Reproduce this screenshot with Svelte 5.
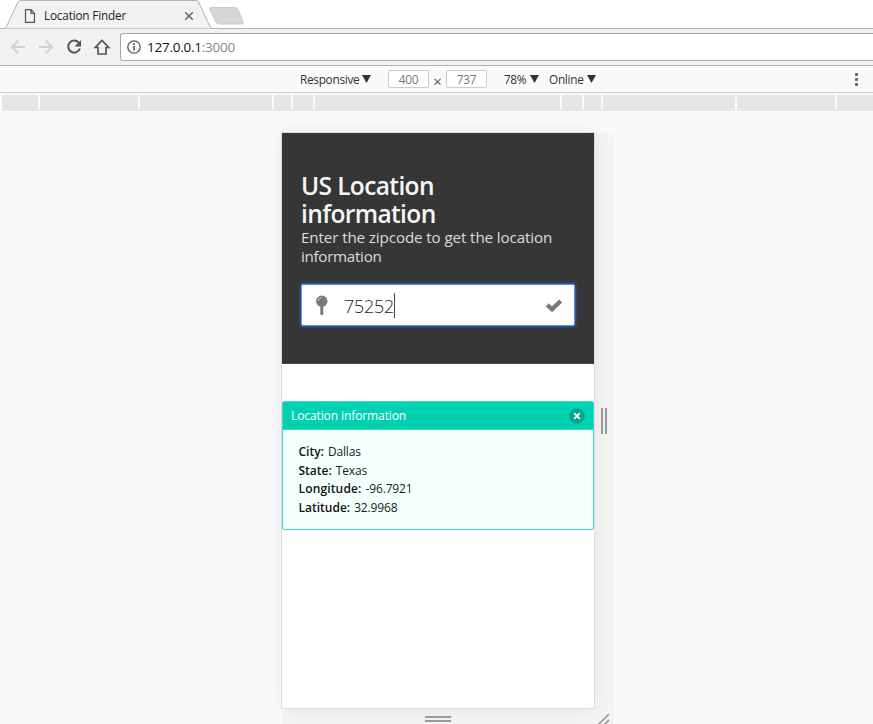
<script>
  let zipcode = $state('75252');
  const segments = [36, 98, 132, 17, 20, 245, 20, 17, 132, 98, 36];
  const facts = [
    ['City', 'Dallas', 'city'],
    ['State', 'Texas', 'state'],
    ['Longitude', '-96.7921', 'longitude'],
    ['Latitude', '32.9968', 'latitude']
  ];
</script>

<div class="browser">
  <header class="tabs">
    <svg class="tab-shape" width="260" height="29" viewBox="0 0 260 29">
      <path d="M0 28.5H4Q5.5 28.500 6.500 26.500L17.500 3Q18.5.5 20.500.5H196Q198 .5 199 3L210 26.500Q211 28.500 213 28.500H260V29H0Z" fill="#f2f2f2" stroke="#b3b1b3" />
      <path d="M211.500 7.500H235.500Q237 7.500 238 9.500L243 21.500Q243.700 24 241.500 24H219Q217 24 216 22L209.500 9Q209 7.500 211.500 7.500Z" fill="#d6d6d6" stroke="#c9c9c9" />
    </svg>
    <svg class="page-icon" width="12" height="14" viewBox="0 0 12 14"><path d="M1.500.600H7L10.500 4.500V13.400H1.500ZM7 .600V4.500H10.500" fill="none" stroke="#555" stroke-width="1.200" /></svg>
    <span class="tab-title">Location Finder</span>
    <svg class="tab-close" width="10" height="10" viewBox="0 0 10 10"><path d="M1.200 1.200L8.800 8.800M8.800 1.200L1.200 8.800" stroke="#666" stroke-width="1.600" /></svg>
  </header>

  <nav class="toolbar">
    <svg width="112" height="22" viewBox="0 0 112 22" fill="none">
      <g stroke="#d2d2d2" stroke-width="1.800"><path d="M25 11H12.500M18.500 4.500L12 11L18.500 17.500" /><path d="M39 11H51.500M45.500 4.500L52 11L45.500 17.500" /></g>
      <path d="M78.700 6.600A6 6 0 1 0 79.900 12.500" stroke="#555" stroke-width="2" />
      <path d="M81 4V10.500H74.500Z" fill="#555" />
      <path d="M102 4.400L95.300 11.500H98V18H106V11.500H108.700Z" stroke="#555" stroke-width="1.700" />
    </svg>
    <div class="address">
      <svg width="14" height="14" viewBox="0 0 14 14"><circle cx="7" cy="7" r="6.200" fill="none" stroke="#555" stroke-width="1.300" /><path d="M7 6V10.500M7 3.200V4.900" stroke="#555" stroke-width="1.700" /></svg>
      <span class="url">127.0.0.1<i>:3000</i></span>
    </div>
  </nav>

  <div class="device-bar">
    <span class="responsive">Responsive</span><b class="arrow"></b>
    <span class="dim first">400</span><span class="times">×</span><span class="dim">737</span>
    <span class="zoom">78%</span><b class="arrow"></b>
    <span class="online">Online</span><b class="arrow"></b>
    <div class="more"><i></i><i></i><i></i></div>
  </div>
  <div class="ruler">
    {#each segments as width}<i style="width: {width}px"></i>{/each}
  </div>

  <main class="stage">
    <div class="device">
      <div class="screen">
        <section class="hero">
          <h1>US Location<br />information</h1>
          <p><span class="line-one">Enter the zipcode to get the location</span><br /><span class="line-two">information</span></p>
          <div class="field">
            <svg class="pin" width="14" height="21" viewBox="0 0 14 21"><rect x="5.300" y="10" width="3" height="10" rx="1" fill="#7a7a7a" /><circle cx="6.800" cy="6.300" r="5.700" fill="#7a7a7a" /><path d="M3.200 6A3.500 3.500 0 0 1 6.500 2.500" fill="none" stroke="#ddd" stroke-width=".8" /></svg>
            <span class="value">{zipcode}</span><i class="caret"></i>
            <svg class="check" width="18" height="15" viewBox="0 0 18 15"><path d="M2.200 6.900L7 11.300L15.700 2.900" fill="none" stroke="#7a7a7a" stroke-width="4.200" /></svg>
          </div>
        </section>
        <article class="message">
          <div class="message-head">
            <span>Location information</span>
            <svg width="16" height="16" viewBox="0 0 16 16"><circle cx="8" cy="8" r="7.800" fill="#00a78e" /><path d="M5.200 5.200L10.800 10.800M10.800 5.200L5.200 10.800" stroke="#fff" stroke-width="1.900" /></svg>
          </div>
          <ul>
            {#each facts as [label, value, key]}
              <li class={key}><strong>{label}:</strong><span>{value}</span></li>
            {/each}
          </ul>
        </article>
      </div>
      <div class="side-grip"><i></i><i></i></div>
      <div class="bottom-grip">
        <div class="bars"><i></i><i></i></div>
        <svg width="14" height="14" viewBox="0 0 14 14"><path d="M1 13L12 2M7 13L12 8" stroke="#999" stroke-width="1.700" /></svg>
      </div>
    </div>
  </main>
</div>

<style>
  :global(body) { margin: 0; overflow: hidden; }
  .browser { width: 873px; height: 724px; overflow: hidden; display: flex; flex-direction: column; background: #fafafa; font-family: "Open Sans", "Noto Sans", sans-serif; color: #333; }
  .browser * { box-sizing: border-box; }
  i { font-style: normal; }
  svg { display: block; flex: none; }
  span { white-space: nowrap; }

  .tabs { height: 29px; flex: none; display: flex; align-items: center; background: linear-gradient(#b3b1b3, #b3b1b3) 0 28px / 100% 1px no-repeat #fff; position: relative; }
  .tab-shape { position: absolute; left: 0; top: 0; }
  .page-icon { margin-left: 24px; position: relative; top: 1px; }
  .tab-title { margin-left: 8px; width: 140px; font-size: 11.800px; letter-spacing: -.2px; line-height: 16px; color: #222; position: relative; }
  .tab-close { position: relative; top: 1px; }

  .toolbar { height: 37px; flex: none; display: flex; align-items: center; background: #f2f2f2; border-bottom: 1px solid #b3b1b3; }
  .address { flex: 1; margin-left: 8px; height: 28px; display: flex; align-items: center; background: #fff; border: 1px solid #a9a7a9; border-right: 0; border-radius: 3px 0 0 3px; padding-left: 6px; }
  .url { margin-left: 6px; font-size: 13.500px; letter-spacing: -.24px; color: #111; }
  .url i { color: #888; }

  .device-bar { height: 27px; flex: none; display: flex; align-items: center; border-bottom: 1px solid #ccc; padding-left: 300px; font-size: 11.800px; letter-spacing: -.28px; line-height: 16px; }
  .responsive { width: 62px; }
  .arrow { width: 9px; height: 8px; background: #333; clip-path: polygon(0 0, 100% 0, 50% 100%); }
  .dim { width: 41px; height: 18px; border: 1px solid #ccc; border-radius: 2px; background: #fff; color: #777; text-align: center; }
  .first { margin-left: 17px; }
  .times { width: 17px; text-align: center; color: #555; font-size: 15px; position: relative; top: 2px; }
  .zoom { width: 26px; margin-left: 17px; letter-spacing: -.4px; }
  .online { width: 38px; margin-left: 10px; }
  .more { margin-left: auto; margin-right: 15px; display: grid; gap: 2px; }
  .more i { width: 3px; height: 3px; border-radius: 1px; background: #666; }

  .ruler { height: 16px; margin-top: 2px; flex: none; display: flex; gap: 2px; padding-left: 2px; background: linear-gradient(#e5e5e5, #e5e5e5) 2px 15px no-repeat; }
  .ruler i { height: 16px; flex: none; background: #e5e5e5; }

  .stage { flex: 1; padding: 22px 0 0 282px; }
  .device { width: 332px; display: grid; grid-template-columns: 312px 20px; grid-template-rows: 575px 16px; background: #f4f4f4; }
  .screen { background: #fff; box-shadow: 0 0 0 1px #ddd, 0 0 20px rgba(0, 0, 0, .07); min-width: 0; }
  .hero { height: 231px; background: #363636; border-bottom: 1px solid #444; padding: 39px 19px 0; }
  h1 { margin: 0; font-size: 24.500px; letter-spacing: -.62px; font-weight: 600; line-height: 28px; color: #f5f5f5; }
  p { margin: -1px 0 0; font-size: 15.200px; letter-spacing: -.12px; line-height: 19px; color: #dcdcdc; }
  .line-two { letter-spacing: -.3px; }
  p span { position: relative; top: 1px; }
  .field { margin-top: 19px; width: 274px; height: 42px; background: #fff; border: 1px solid #5e8ee2; border-radius: 2px; box-shadow: 0 0 0 1px #2d529b, 0 0 3px 1px #33559a; display: flex; align-items: center; padding: 0 11px 0 13px; }
  .value { margin-left: 15px; width: 50px; font-size: 17.900px; letter-spacing: -.23px; font-weight: 300; line-height: 24px; color: #222; position: relative; top: 1px; }
  .caret { width: 1px; height: 25px; background: #444; }
  .check { margin-left: auto; }
  .message { margin-top: 37px; height: 129px; border-radius: 2px; background: #f5fffd; border: 1px solid #3cdcc6; overflow: hidden; }
  .message-head { height: 29px; margin: -1px -1px 0; border-top: 1px solid #1ddbc0; border-bottom: 1px solid #3cdcc6; background: #00d1b2; display: flex; justify-content: space-between; align-items: center; padding: 0 9px; color: #fff; font-size: 12px; letter-spacing: -.1px; font-weight: 500; }
  ul { list-style: none; margin: 0; padding: 13px 15.500px; font-size: 12px; letter-spacing: -.15px; line-height: 18.700px; color: #222; }
  li { display: flex; gap: 4px; }
  strong { font-weight: 600; color: #111; letter-spacing: 0; }
  .longitude strong { letter-spacing: .15px; }
  .side-grip { display: flex; justify-content: center; align-items: center; gap: 2px; }
  .side-grip i { width: 2px; height: 26px; background: #999; }
  .bottom-grip { grid-column: 1 / 3; display: flex; align-items: center; padding: 5px 3px 0 143px; justify-content: space-between; }
  .bars { display: grid; gap: 2px; }
  .bars i { width: 26px; height: 2px; background: #999; }
</style>
